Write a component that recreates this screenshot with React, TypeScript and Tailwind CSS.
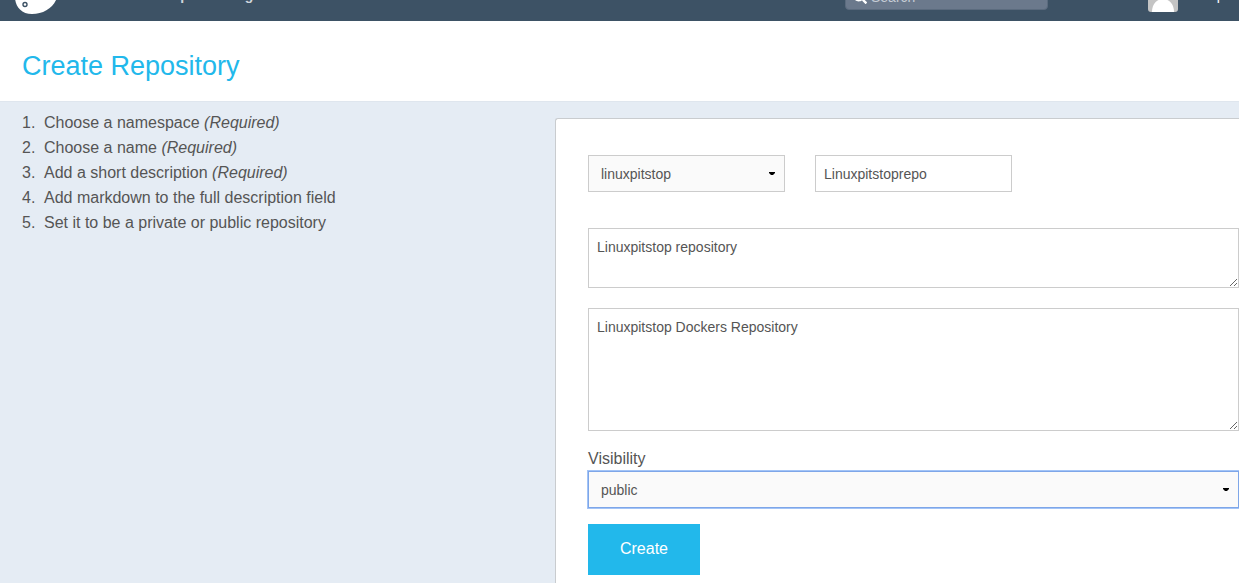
import React from "react";
import { FaSearch } from "react-icons/fa";

const steps = [
  { text: "Choose a namespace", required: true },
  { text: "Choose a name", required: true },
  { text: "Add a short description", required: true },
  { text: "Add markdown to the full description field", required: false },
  { text: "Set it to be a private or public repository", required: false },
];

const Caret = () => (
  <svg
    className="absolute right-[10px] top-1/2 -translate-y-1/2 pointer-events-none"
    width="6"
    height="5"
    viewBox="0 0 6 5"
  >
    <path d="M0 0.500h6v1L4 3.500h-2L0 1.500z" fill="#000" />
  </svg>
);

const Header = () => (
  <header className="h-[21px] flex items-end bg-[#3d5265] text-white text-sm leading-5 overflow-hidden">
    <svg className="ml-[14px] mb-[7px] shrink-0" width="44" height="34" viewBox="0 0 44 34">
      <path
        d="M0.500 8C0.500 18 1 25 6 29.500C9 32.500 13 34 18 34C29 34 38.500 28.500 42.500 19L44 8z"
        fill="#fff"
      />
      <circle cx="11" cy="24.500" r="2" fill="#fff" stroke="#3d5265" strokeWidth="1.400" />
    </svg>
    <nav className="flex gap-[14px] ml-[18px] mb-4 font-bold text-[#cfd6dc]">
      <a href="#dashboard">Dashboard</a>
      <a href="#explore">Explore</a>
      <a href="#organizations">Organizations</a>
    </nav>
    <div className="flex items-end ml-auto shrink-0">
      <label className="flex items-center gap-1 w-[203px] h-[26px] mb-[11px] mr-[100px] pl-[7px] rounded-sm bg-[#6b798c] border border-[#5b6b7e]">
        <FaSearch size={14} className="shrink-0" />
        <input
          type="search"
          aria-label="Search"
          placeholder="Search"
          className="w-full bg-transparent outline-none placeholder:text-[#c5ccd5]"
        />
      </label>
      <svg className="mb-[9px] rounded-[3px]" width="30" height="30" viewBox="0 0 30 30">
        <rect width="30" height="30" fill="#c4c4c4" />
        <circle cx="15" cy="10" r="6" fill="#fff" />
        <path d="M4 30C4 22 9 17 15 17S26 22 26 30z" fill="#fff" />
      </svg>
      <a href="#account" className="w-[51px] ml-[10px] mb-4">
        linuxpitstop
      </a>
    </div>
  </header>
);

export default function App() {
  return (
    <div className="min-h-screen flex flex-col bg-white text-[#555] text-base font-['Liberation_Sans',Arial,sans-serif] overflow-x-hidden">
      <Header />
      <div className="px-[22px] pt-6 pb-[14px]">
        <h1 className="text-[27px] leading-[42px] text-[#22b8eb]">Create Repository</h1>
      </div>
      <main className="flex-1 grid grid-cols-[555px_1fr] bg-[#e5ecf4] border-t border-[#dfe6ee]">
        <ol className="pl-[22px] pt-2 leading-[25px]">
          {steps.map((step, i) => (
            <li key={step.text} className="flex">
              <span className="w-[22px]">{i + 1}.</span>
              <span>
                {step.text} {step.required && <em>(Required)</em>}
              </span>
            </li>
          ))}
        </ol>
        <form
          className="mt-4 pl-8 pt-9 pb-2 bg-white border-t border-l border-[#c9cccf] rounded-tl-[3px]"
          onSubmit={(e) => e.preventDefault()}
        >
          <div className="flex gap-[30px]">
            <div className="relative w-[197px]">
              <select
                aria-label="Namespace"
                className="block appearance-none w-full h-[37px] px-3 text-sm bg-[#fafafa] border border-[#ccc] outline-none"
              >
                <option>linuxpitstop</option>
              </select>
              <Caret />
            </div>
            <input
              type="text"
              aria-label="Name"
              defaultValue="Linuxpitstoprepo"
              className="w-[197px] h-[37px] px-2 text-sm bg-white border border-[#ccc] outline-none"
            />
          </div>
          <textarea
            aria-label="Short description"
            defaultValue="Linuxpitstop repository"
            className="block w-full h-[60px] mt-9 p-2 text-sm leading-5 border border-[#ccc] outline-none"
          />
          <textarea
            aria-label="Full description"
            defaultValue="Linuxpitstop Dockers Repository"
            className="block w-full h-[123px] mt-5 p-2 text-sm leading-5 border border-[#ccc] outline-none"
          />
          <label htmlFor="visibility" className="block mt-4 leading-6">
            Visibility
          </label>
          <div className="relative">
            <select
              id="visibility"
              className="block appearance-none w-full h-[37px] px-3 text-sm bg-[#fafafa] border border-[#7ea6e8] ring-1 ring-[#a3c4f7] outline-none"
            >
              <option>public</option>
              <option>private</option>
            </select>
            <Caret />
          </div>
          <button type="submit" className="block mt-4 w-28 h-[51px] pb-0.5 bg-[#22b8eb] text-white">
            Create
          </button>
        </form>
      </main>
    </div>
  );
}
